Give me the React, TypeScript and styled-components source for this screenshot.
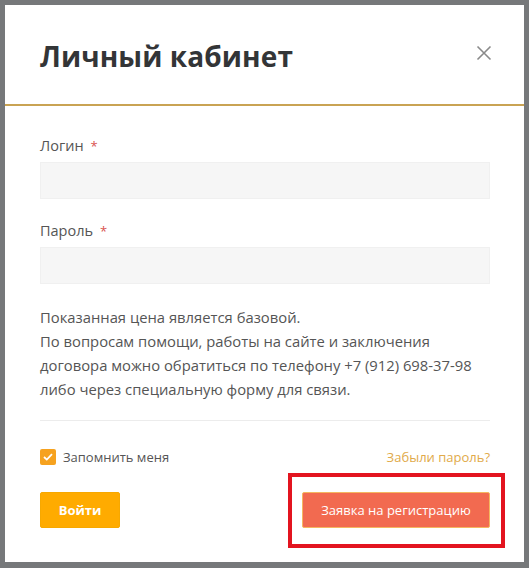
import React, { useState } from 'react';
import styled, { createGlobalStyle } from 'styled-components';

const GlobalStyle = createGlobalStyle`
  html, body {
    margin: 0;
    padding: 0;
    background: #76787a;
    font-family: "Open Sans", "Liberation Sans", sans-serif;
  }
  * { box-sizing: border-box; }
`;

const Backdrop = styled.div`
  width: 529px;
  height: 568px;
  padding: 5px 5px 6px 5px;
  background: #76787a;
`;

const Modal = styled.div`
  position: relative;
  width: 519px;
  height: 557px;
  background: #fff;
  display: flex;
  flex-direction: column;
`;

const Header = styled.div`
  height: 101px;
  padding: 0 32px 0 35px;
  border-bottom: 2px solid #c9a353;
  display: flex;
  align-items: center;
  justify-content: space-between;
`;

const Title = styled.h2`
  margin: 0;
  padding-top: 2px;
  font-size: 28px;
  font-weight: 700;
  color: #333537;
  letter-spacing: 0.1px;
`;

const CloseButton = styled.button`
  border: 0;
  background: none;
  padding: 0;
  width: 16px;
  height: 16px;
  margin-top: -4px;
  cursor: pointer;
  display: flex;
`;

const Body = styled.div`
  padding: 30px 34px 0 35px;
  display: flex;
  flex-direction: column;
`;

const Field = styled.div`
  display: flex;
  flex-direction: column;
  margin-bottom: 22px;
`;

const Label = styled.label`
  font-size: 14.5px;
  line-height: 20px;
  color: #555;
  margin-bottom: 6px;
`;

const Required = styled.span`
  color: #d9534f;
  margin-left: 7px;
  font-size: 13px;
`;

const Input = styled.input`
  height: 37px;
  border: 1px solid #f0f0f0;
  background: #f6f6f6;
  padding: 0 12px;
  font-family: inherit;
  font-size: 14px;
  outline: none;
`;

const Note = styled.p`
  margin: -1px 0 0;
  font-size: 14.8px;
  line-height: 24px;
  color: #555;
`;

const Divider = styled.hr`
  margin: 19px 0 0;
  border: 0;
  border-top: 1px solid #ececec;
`;

const Row = styled.div<{ $gap: number }>`
  display: flex;
  align-items: center;
  justify-content: space-between;
  margin-top: ${(p) => p.$gap}px;
`;

const CheckLabel = styled.label`
  display: flex;
  align-items: center;
  gap: 7px;
  font-size: 13px;
  color: #555;
  cursor: pointer;
`;

const Box = styled.span<{ $on: boolean }>`
  width: 16px;
  height: 16px;
  border-radius: 2px;
  background: ${(p) => (p.$on ? '#f6a21f' : '#fff')};
  border: ${(p) => (p.$on ? '0' : '1px solid #ccc')};
  display: flex;
  align-items: center;
  justify-content: center;
`;

const Link = styled.a`
  font-size: 13px;
  color: #e1aa4a;
  text-decoration: none;
`;

const Button = styled.button<{ $kind: 'primary' | 'accent' }>`
  height: 36px;
  border-radius: 2px;
  font-family: inherit;
  font-size: 13px;
  color: #fff;
  cursor: pointer;
  ${(p) =>
    p.$kind === 'primary'
      ? `
    width: 80px;
    background: #ffab00;
    border: 1px solid #f7a800;
    font-weight: 700;
  `
      : `
    width: 188px;
    background: #f26a50;
    border: 1px solid #f5b760;
    font-weight: 400;
  `}
`;

const Highlight = styled.div`
  position: absolute;
  left: 283px;
  top: 468px;
  width: 217px;
  height: 75px;
  border: 4px solid #e3141f;
  pointer-events: none;
`;

export default function App() {
  const [remember, setRemember] = useState(true);
  return (
    <>
      <GlobalStyle />
      <Backdrop>
        <Modal>
          <Header>
            <Title>Личный кабинет</Title>
            <CloseButton aria-label="Закрыть">
              <svg width="16" height="16" viewBox="0 0 16 16">
                <path d="M1.5 1.5 L14.5 14.5 M14.5 1.5 L1.5 14.5" stroke="#8a8a8a" strokeWidth="1.6" />
              </svg>
            </CloseButton>
          </Header>
          <Body>
            <Field>
              <Label>
                Логин<Required>*</Required>
              </Label>
              <Input type="text" />
            </Field>
            <Field>
              <Label>
                Пароль<Required>*</Required>
              </Label>
              <Input type="password" />
            </Field>
            <Note>
              Показанная цена является базовой.
              <br />
              По вопросам помощи, работы на сайте и заключения
              <br />
              договора можно обратиться по телефону +7 (912) 698-37-98
              <br />
              либо через специальную форму для связи.
            </Note>
            <Divider />
            <Row $gap={27}>
              <CheckLabel onClick={() => setRemember(!remember)}>
                <Box $on={remember}>
                  {remember && (
                    <svg width="10" height="8" viewBox="0 0 10 8">
                      <path d="M1 4 L3.8 6.6 L9 1.2" fill="none" stroke="#fff" strokeWidth="1.8" />
                    </svg>
                  )}
                </Box>
                Запомнить меня
              </CheckLabel>
              <Link href="#">Забыли пароль?</Link>
            </Row>
            <Row $gap={26}>
              <Button $kind="primary">Войти</Button>
              <Button $kind="accent">Заявка на регистрацию</Button>
            </Row>
          </Body>
          <Highlight />
        </Modal>
      </Backdrop>
    </>
  );
}
